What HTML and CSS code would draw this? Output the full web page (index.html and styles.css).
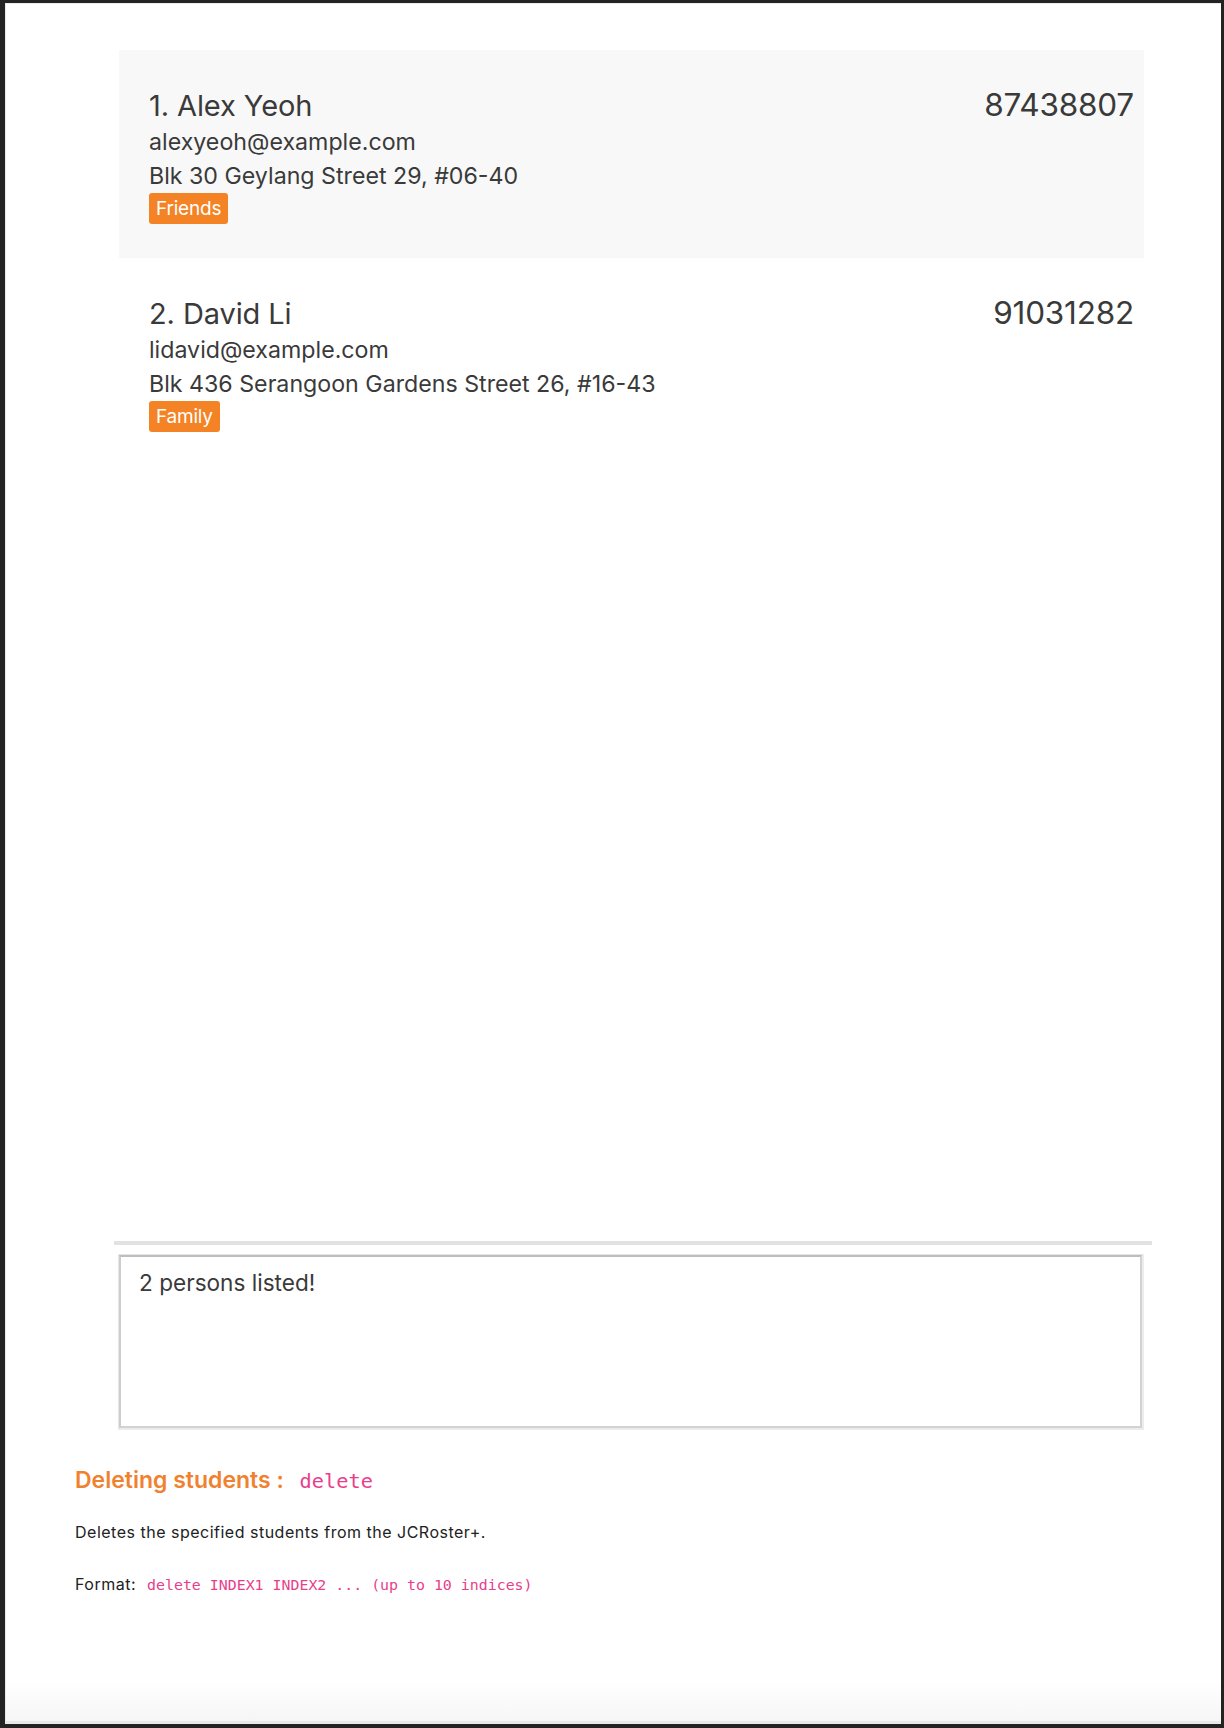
FILE: index.html
```html
<!DOCTYPE html>
<html lang="en">
<head>
<meta charset="utf-8">
<title>JCRoster+ delete</title>
<link rel="stylesheet" href="styles.css">
</head>
<body>
<div class="frame">
  <div class="page">
    <div class="app">
      <div class="list">
        <div class="card card-alt">
          <div class="row-top">
            <span class="name">1. Alex Yeoh</span>
            <span class="phone">87438807</span>
          </div>
          <div class="line">alexyeoh@example.com</div>
          <div class="line">Blk 30 Geylang Street 29, #06-40</div>
          <div class="tags"><span class="tag">Friends</span></div>
        </div>
        <div class="card">
          <div class="row-top">
            <span class="name">2. David Li</span>
            <span class="phone">91031282</span>
          </div>
          <div class="line">lidavid@example.com</div>
          <div class="line">Blk 436 Serangoon Gardens Street 26, #16-43</div>
          <div class="tags"><span class="tag">Family</span></div>
        </div>
      </div>
      <div class="divider"></div>
      <div class="result">
        <div class="result-inner">2 persons listed!</div>
      </div>
    </div>
    <div class="doc">
      <h4 class="doc-title">Deleting students : <code class="code-lg">delete</code></h4>
      <p class="doc-p">Deletes the specified students from the JCRoster+.</p>
      <p class="doc-p doc-format">Format: <code class="code-sm">delete INDEX1 INDEX2 ... (up to 10 indices)</code></p>
    </div>
  </div>
</div>
</body>
</html>
```

FILE: styles.css
```css
* { box-sizing: border-box; }

html, body {
  margin: 0;
  padding: 0;
  background: #222222;
}

body {
  width: 1224px;
  height: 1728px;
  overflow: hidden;
  font-family: Inter, "Noto Sans", "Liberation Sans", sans-serif;
}

.frame {
  width: 1224px;
  height: 1728px;
  border-style: solid;
  border-color: #232323;
  border-width: 3px 3px 4px 5px;
  background: #ffffff;
}

.page {
  height: 100%;
  border-top: 1px solid #ececec;
  border-left: 1px solid #e9e9e9;
  border-bottom: 3px solid #e9e9e9;
  background: linear-gradient(to bottom, #ffffff 0, #ffffff calc(100% - 40px), #f6f6f6 100%);
}

.app {
  margin-left: 108px;
  width: 1038px;
  display: flex;
  flex-direction: column;
}

.list {
  height: 1237px;
  padding-top: 46px;
  display: flex;
  flex-direction: column;
}

.card {
  margin-left: 5px;
  width: 1025px;
  height: 208px;
  padding: 36px 10px 0 30px;
  color: #3a3a3a;
  background: #ffffff;
}

.card-alt {
  background: #f8f8f8;
}

.row-top {
  display: flex;
  justify-content: space-between;
  align-items: baseline;
}

.name {
  font-size: 29px;
  line-height: 38px;
  letter-spacing: -0.1px;
}

.phone {
  font-size: 31.5px;
  line-height: 38px;
  letter-spacing: -0.2px;
}

.line {
  font-size: 23.2px;
  line-height: 34px;
}

.tags {
  display: flex;
  gap: 6px;
}

.tag {
  display: inline-block;
  height: 31px;
  line-height: 31px;
  padding: 0 7px;
  border-radius: 3px;
  background: #f48325;
  color: #ffffff;
  font-size: 19px;
  letter-spacing: -0.2px;
}

.divider {
  height: 4px;
  background: #e2e2e2;
}

.result {
  margin-top: 9px;
  margin-left: 4px;
  width: 1026px;
  height: 176px;
  border: 1px solid #e6e6e6;
  border-right-width: 2px;
  border-bottom-width: 2px;
  border-right-color: #ececec;
  border-bottom-color: #ececec;
}

.result-inner {
  height: 100%;
  border: 2px solid #d2d2d2;
  border-top-color: #bdbdbd;
  border-left-color: #cdcdcd;
  background: #ffffff;
  padding: 11px 18px;
  color: #3a3a3a;
  font-size: 22.6px;
  line-height: 30px;
}

.doc {
  padding-left: 69px;
  margin-top: 35px;
  color: #212121;
}

.doc-title {
  margin: 0;
  font-size: 23px;
  line-height: 30px;
  font-weight: 600;
  color: #f0822f;
}

.code-lg {
  font-family: "DejaVu Sans Mono", "Liberation Mono", monospace;
  font-size: 20.3px;
  font-weight: 400;
  color: #e83e8c;
  margin-left: 10px;
}

.doc-p {
  margin: 24px 0 0 0;
  font-size: 16px;
  line-height: 24px;
  letter-spacing: 0.5px;
}

.doc-format {
  margin-top: 28px;
}

.code-sm {
  font-family: "DejaVu Sans Mono", "Liberation Mono", monospace;
  font-size: 14.9px;
  letter-spacing: 0;
  color: #e83e8c;
  margin-left: 6px;
}
```
